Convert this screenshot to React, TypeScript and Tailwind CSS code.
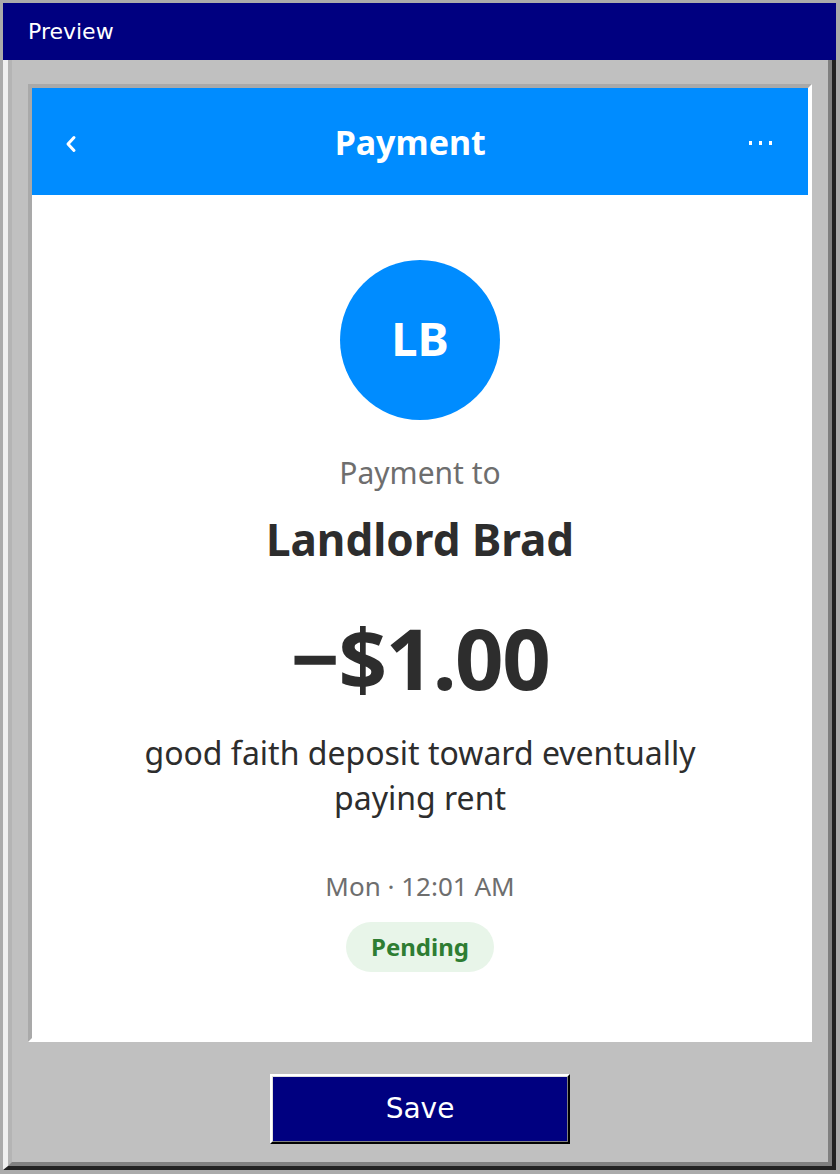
import React from 'react';

const ui = { fontFamily: '"Noto Sans", "Open Sans", sans-serif' };
const chrome = { fontFamily: '"DejaVu Sans", "Liberation Sans", sans-serif' };

// Blue header bar of the phone screen
const ScreenHeader: React.FC = () => (
  <div className="h-[107px] bg-[#008cff] flex items-center px-[33px] text-white">
    <svg width="12" height="18" viewBox="0 0 12 18" className="flex-shrink-0 mt-[5px]">
      <path d="M9 2.5 L3 9 L9 15.5" fill="none" stroke="white" strokeWidth="3" strokeLinecap="round" strokeLinejoin="round" />
    </svg>
    <div className="flex-1 text-center text-[34px] font-bold leading-none pr-[5px]">Payment</div>
    <div className="flex items-center gap-[6.5px] pr-[3px] mt-[3px]">
      <span className="w-[3.5px] h-[3.5px] bg-white"></span>
      <span className="w-[3.5px] h-[3.5px] bg-white"></span>
      <span className="w-[3.5px] h-[3.5px] bg-white"></span>
    </div>
  </div>
);

// Payment detail body
const PaymentDetail: React.FC = () => (
  <div className="flex flex-col items-center text-center">
    <div className="mt-[65px] w-[160px] h-[160px] rounded-full bg-[#008cff] flex items-center justify-center">
      <span className="text-white text-[47px] font-bold leading-none mb-[4px]">LB</span>
    </div>
    <div className="mt-[35px] text-[30px] leading-[36px] text-[#6e6e6e]">Payment to</div>
    <div className="mt-[20px] text-[44px] leading-[56px] font-bold text-[#2d2d2d]">Landlord Brad</div>
    <div className="mt-[40px] text-[85px] leading-[100px] font-bold text-[#2d2d2d] tracking-[-1.5px]">−$1.00</div>
    <div className="mt-[23px] max-w-[620px] text-[32px] leading-[45px] text-[#2d2d2d]">
      good faith deposit toward eventually paying rent
    </div>
    <div className="mt-[50px] text-[26px] leading-[32px] text-[#6e6e6e]">Mon · 12:01 AM</div>
    <div className="mt-[20px] h-[50px] px-[25px] rounded-full bg-[#e8f5e9] flex items-center">
      <span className="text-[24px] font-bold text-[#2e7d32]">Pending</span>
    </div>
  </div>
);

export default function App() {
  return (
    <div className="w-[840px] h-[1174px] bg-[#ababab] pt-[3px] pl-[3px] pr-[4px] pb-[4px] flex flex-col">
      {/* Title bar */}
      <div className="h-[57px] bg-[#000080] text-white flex items-center pl-[25px] text-[22px]" style={chrome}>
        Preview
      </div>

      {/* Window body with outset bevel */}
      <div className="flex-1 flex flex-col border-l-[5px] border-l-[#f0f0f0] border-r-4 border-r-[#222222] border-b-4 border-b-[#222222]">
        <div className="flex-1 flex flex-col items-center bg-[#c0c0c0] border-l-4 border-l-[#b4b4b4] border-r-4 border-r-[#808080] border-b-4 border-b-[#808080] pt-[24px] px-[16px]">
          {/* Phone screen with inset bevel */}
          <div
            className="w-full h-[958px] bg-white border-4 border-t-[#a9a9a9] border-l-[#a9a9a9] border-r-white border-b-white"
            style={ui}
          >
            <ScreenHeader />
            <PaymentDetail />
          </div>

          {/* Save button */}
          <button
            className="mt-[32px] w-[300px] h-[70px] border-2 border-t-white border-l-white border-r-black border-b-black"
            style={chrome}
          >
            <div className="w-full h-full bg-[#000080] border border-t-[#dfdfdf] border-l-[#dfdfdf] border-r-[#808080] border-b-[#808080] flex items-center justify-center text-white text-[28px]">
              Save
            </div>
          </button>
        </div>
      </div>
    </div>
  );
}
